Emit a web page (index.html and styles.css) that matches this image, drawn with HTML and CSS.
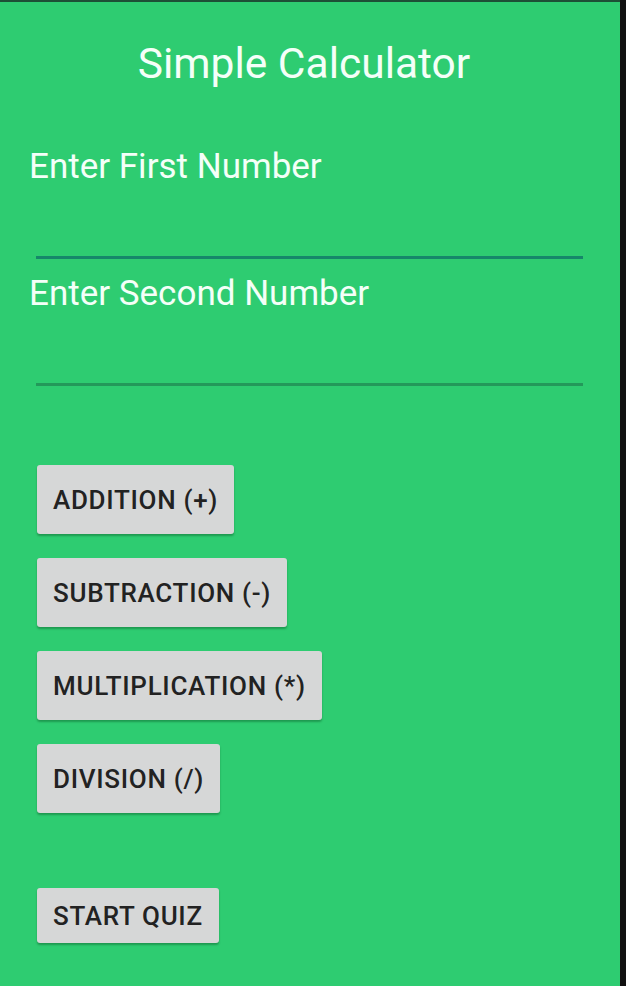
FILE: index.html
```html
<!DOCTYPE html>
<html>
<head>
<meta charset="utf-8">
<link rel="stylesheet" href="styles.css">
</head>
<body>
<div class="screen">
  <main class="app">
    <h1 class="title">Simple Calculator</h1>
    <label class="field">
      <span class="label">Enter First Number</span>
      <span class="input input-first"></span>
    </label>
    <label class="field field-second">
      <span class="label">Enter Second Number</span>
      <span class="input input-second"></span>
    </label>
    <div class="ops">
      <button class="btn">ADDITION (+)</button>
      <button class="btn">SUBTRACTION (-)</button>
      <button class="btn">MULTIPLICATION (*)</button>
      <button class="btn">DIVISION (/)</button>
    </div>
    <button class="btn btn-quiz">START QUIZ</button>
  </main>
  <div class="edge"></div>
</div>
</body>
</html>
```
FILE: styles.css
```css
html, body {
  margin: 0;
  padding: 0;
  background: #111111;
}
.screen {
  display: flex;
  width: 626px;
  height: 986px;
  overflow: hidden;
}
.app {
  width: 620px;
  height: 986px;
  background: #2ecc71;
  border-top: 2px solid #1d4f36;
  box-sizing: border-box;
  display: flex;
  flex-direction: column;
  align-items: flex-start;
  font-family: Roboto, "Liberation Sans", sans-serif;
}
.edge {
  flex: 1;
  background: #111111;
}
.title {
  align-self: stretch;
  margin: 37px 12px 0 0;
  font-size: 42.5px;
  line-height: 50px;
  font-weight: 400;
  color: #f4fff8;
  text-align: center;
}
.field {
  align-self: stretch;
  display: flex;
  flex-direction: column;
  margin-top: 57px;
}
.field-second {
  margin-top: 14px;
}
.label {
  padding-left: 29px;
  font-size: 35px;
  line-height: 42px;
  color: #f4fff8;
}
.input {
  display: block;
  height: 68px;
  margin: 0 37px 0 36px;
  border-bottom: 3px solid #16876a;
}
.input-second {
  border-bottom-color: #23995a;
}
.ops {
  display: flex;
  flex-direction: column;
  align-items: flex-start;
  gap: 24px;
  margin-top: 79px;
  margin-left: 37px;
}
.btn {
  height: 69px;
  padding: 0 16px;
  border: none;
  border-radius: 3px;
  background: #d6d7d7;
  color: #222222;
  font-family: Roboto, "Liberation Sans", sans-serif;
  font-size: 26px;
  font-weight: 500;
  letter-spacing: 0.7px;
  box-shadow: 0 2px 2px rgba(0, 60, 20, 0.35);
}
.btn-quiz {
  height: 55px;
  margin-top: 75px;
  margin-left: 37px;
}
```
